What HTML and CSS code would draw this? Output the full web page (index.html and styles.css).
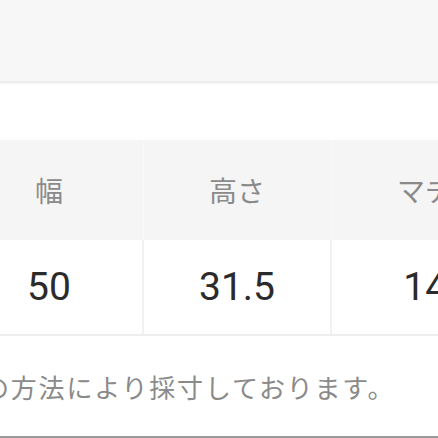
FILE: index.html
```html
<!DOCTYPE html>
<html lang="ja">
<head>
<meta charset="utf-8">
<link rel="stylesheet" href="styles.css">
</head>
<body>
<div class="page">
  <div class="topbar"></div>
  <div class="gap"></div>
  <div class="table-wrap">
    <table class="size-table">
      <thead>
        <tr><th>幅</th><th>高さ</th><th>マチ</th></tr>
      </thead>
      <tbody>
        <tr><td>50</td><td>31.5</td><td>14</td></tr>
      </tbody>
    </table>
  </div>
  <p class="note">の方法により採寸しております。</p>
  <div class="rule"></div>
</div>
</body>
</html>
```
FILE: styles.css
```css
html, body {
  margin: 0;
  padding: 0;
  background: #ffffff;
}
.page {
  width: 438px;
  height: 438px;
  overflow: hidden;
  display: flex;
  flex-direction: column;
  font-family: "Noto Sans CJK JP", "Noto Sans", sans-serif;
}
.topbar {
  height: 81px;
  flex: none;
  background: #f7f7f7;
  border-bottom: 2px solid #ececec;
  box-shadow: 0 1px 2px rgba(0, 0, 0, 0.05);
}
.gap {
  height: 57px;
  flex: none;
}
.table-wrap {
  flex: none;
  margin-left: -46px;
  width: 600px;
}
.size-table {
  border-collapse: collapse;
  table-layout: fixed;
  width: 561px;
}
.size-table th,
.size-table td {
  width: 187px;
  text-align: center;
  padding: 0;
}
.size-table th {
  height: 100px;
  background: #f5f5f5;
  color: #8a8a8a;
  font-weight: 400;
  font-size: 28px;
  line-height: 1;
  border-left: 1px solid #f8f8f8;
}
.size-table td {
  height: 94px;
  color: #2b2b2b;
  font-family: Roboto, "Liberation Sans", sans-serif;
  font-size: 39px;
  line-height: 1;
  border-left: 2px solid #f1f1f1;
  border-bottom: 2px solid #eeeeee;
}
.note {
  margin: 38px 0 0 -17px;
  font-size: 26px;
  line-height: 26px;
  color: #8a8a8a;
  white-space: nowrap;
  letter-spacing: 1.8px;
}
.rule {
  margin-top: 36px;
  height: 2px;
  background: #9a9a9a;
  flex: none;
}
```
